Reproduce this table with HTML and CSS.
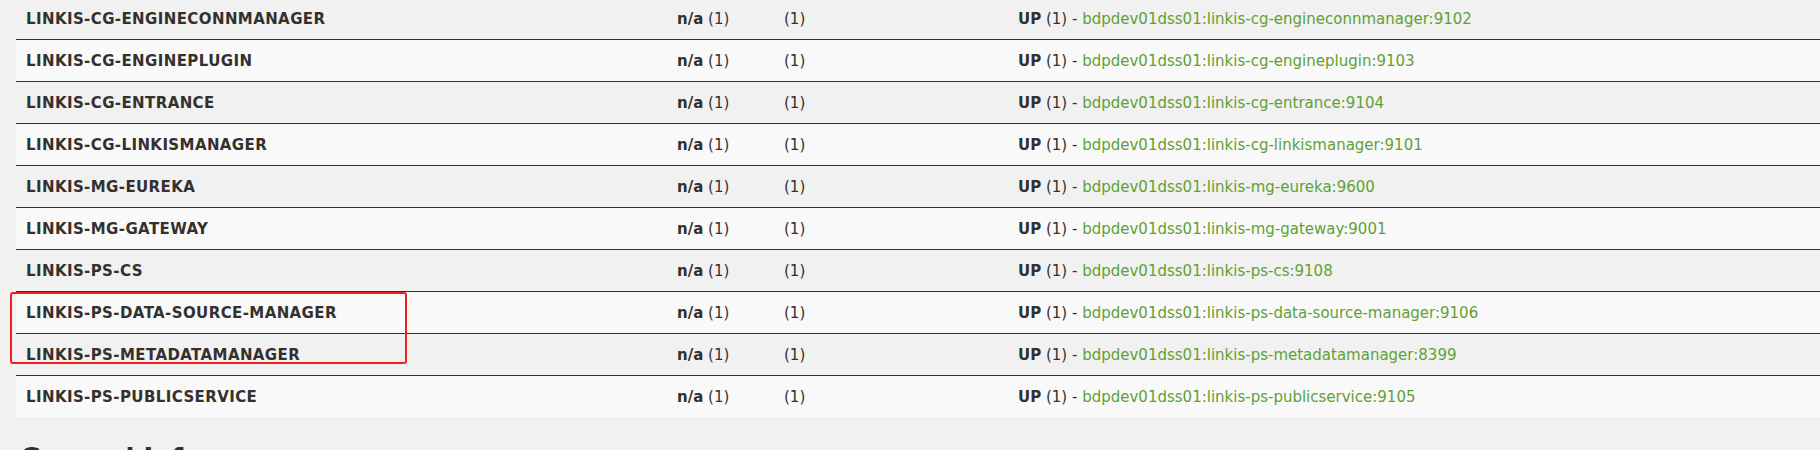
FILE: index.html
```html
<!DOCTYPE html>
<html lang="en">
  <head>
    <meta charset="UTF-8" />
    <meta name="viewport" content="width=device-width, initial-scale=1.0" />
    <title>Eureka</title>
    <link rel="stylesheet" href="styles.css">
  </head>
  <body>
    <div class="page">
      <table class="instances">
        <colgroup>
          <col class="col-name" />
          <col class="col-ami" />
          <col class="col-zone" />
          <col />
        </colgroup>
        <tbody>
          <tr>
            <td class="app"><b>LINKIS-CG-ENGINECONNMANAGER</b></td>
            <td><b>n/a</b> (1)</td>
            <td>(1)</td>
            <td><b>UP</b> (1) - <a href="#">bdpdev01dss01:linkis-cg-engineconnmanager:9102</a></td>
          </tr>
          <tr>
            <td class="app"><b>LINKIS-CG-ENGINEPLUGIN</b></td>
            <td><b>n/a</b> (1)</td>
            <td>(1)</td>
            <td><b>UP</b> (1) - <a href="#">bdpdev01dss01:linkis-cg-engineplugin:9103</a></td>
          </tr>
          <tr>
            <td class="app"><b>LINKIS-CG-ENTRANCE</b></td>
            <td><b>n/a</b> (1)</td>
            <td>(1)</td>
            <td><b>UP</b> (1) - <a href="#">bdpdev01dss01:linkis-cg-entrance:9104</a></td>
          </tr>
          <tr>
            <td class="app"><b>LINKIS-CG-LINKISMANAGER</b></td>
            <td><b>n/a</b> (1)</td>
            <td>(1)</td>
            <td><b>UP</b> (1) - <a href="#">bdpdev01dss01:linkis-cg-linkismanager:9101</a></td>
          </tr>
          <tr>
            <td class="app"><b>LINKIS-MG-EUREKA</b></td>
            <td><b>n/a</b> (1)</td>
            <td>(1)</td>
            <td><b>UP</b> (1) - <a href="#">bdpdev01dss01:linkis-mg-eureka:9600</a></td>
          </tr>
          <tr>
            <td class="app"><b>LINKIS-MG-GATEWAY</b></td>
            <td><b>n/a</b> (1)</td>
            <td>(1)</td>
            <td><b>UP</b> (1) - <a href="#">bdpdev01dss01:linkis-mg-gateway:9001</a></td>
          </tr>
          <tr>
            <td class="app"><b>LINKIS-PS-CS</b></td>
            <td><b>n/a</b> (1)</td>
            <td>(1)</td>
            <td><b>UP</b> (1) - <a href="#">bdpdev01dss01:linkis-ps-cs:9108</a></td>
          </tr>
          <tr>
            <td class="app"><b>LINKIS-PS-DATA-SOURCE-MANAGER</b></td>
            <td><b>n/a</b> (1)</td>
            <td>(1)</td>
            <td><b>UP</b> (1) - <a href="#">bdpdev01dss01:linkis-ps-data-source-manager:9106</a></td>
          </tr>
          <tr>
            <td class="app"><b>LINKIS-PS-METADATAMANAGER</b></td>
            <td><b>n/a</b> (1)</td>
            <td>(1)</td>
            <td><b>UP</b> (1) - <a href="#">bdpdev01dss01:linkis-ps-metadatamanager:8399</a></td>
          </tr>
          <tr>
            <td class="app"><b>LINKIS-PS-PUBLICSERVICE</b></td>
            <td><b>n/a</b> (1)</td>
            <td>(1)</td>
            <td><b>UP</b> (1) - <a href="#">bdpdev01dss01:linkis-ps-publicservice:9105</a></td>
          </tr>
        </tbody>
      </table>

      <h2 class="section-title">General Info</h2>

      <div class="highlight"></div>
    </div>
  </body>
</html>
```

FILE: styles.css
```css
body {
  margin: 0;
  background-color: #f1f1f1;
  color: #34302d;
  font-family: "DejaVu Sans", "Noto Sans", sans-serif;
  font-size: 15px;
}
.page {
  position: relative;
  margin-top: -3px;
  padding-left: 16px;
}
.instances {
  width: 100%;
  border-collapse: collapse;
  table-layout: fixed;
}
.col-name {
  width: 651px;
}
.col-ami {
  width: 107px;
}
.col-zone {
  width: 234px;
}
.instances td {
  height: 41px;
  padding: 0 10px;
  border-top: 1px solid #34302d;
  white-space: nowrap;
  vertical-align: middle;
}
.instances tr:nth-child(even) {
  background-color: #f9f9f9;
}
.instances b {
  font-weight: 600;
}
.instances .app {
  letter-spacing: 0.4px;
}
.instances a {
  color: #5fa134;
  text-decoration: none;
}
.section-title {
  margin: 27px 0 0 4px;
  font-size: 26px;
  font-weight: 600;
  line-height: 1.1;
}
.highlight {
  position: absolute;
  left: 10px;
  top: 295px;
  width: 393px;
  height: 68px;
  border: 2px solid #f21d1d;
  border-radius: 3px;
}
```
